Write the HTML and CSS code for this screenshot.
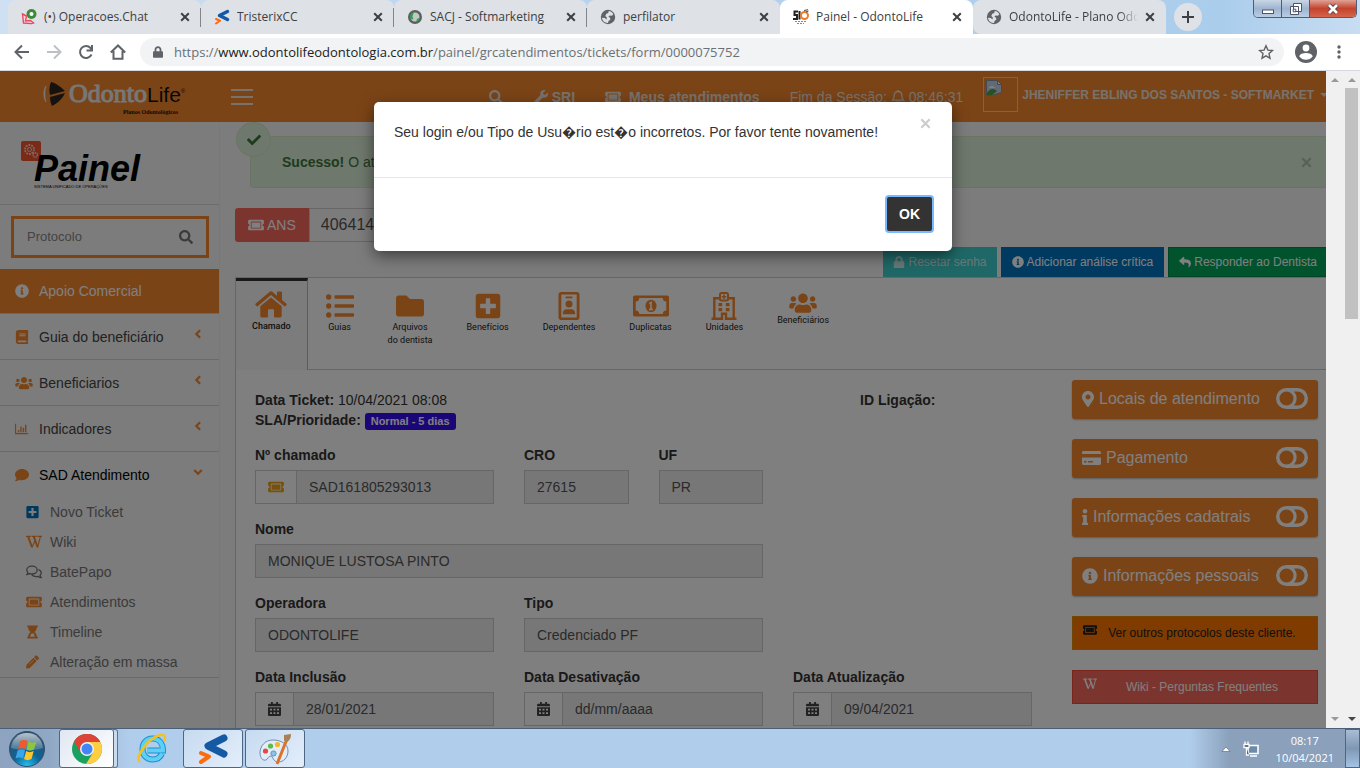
FILE: index.html
```html
<!DOCTYPE html>
<html lang="pt-BR">
<head>
<meta charset="utf-8">
<title>Painel - OdontoLife</title>
<link rel="stylesheet" href="styles.css">
</head>
<body>
<svg class="sprite" aria-hidden="true">
  <symbol id="i-search" viewBox="0 0 512 512"><path d="M505 442.700L405.300 343c-4.500-4.500-10.600-7-17-7H372c27.600-35.300 44-79.700 44-128C416 93.100 322.900 0 208 0S0 93.100 0 208s93.100 208 208 208c48.300 0 92.700-16.400 128-44v16.300c0 6.400 2.500 12.500 7 17l99.700 99.700c9.400 9.400 24.600 9.400 33.900 0l28.300-28.300c9.400-9.400 9.400-24.600.1-34zM208 336c-70.700 0-128-57.200-128-128 0-70.700 57.200-128 128-128 70.700 0 128 57.200 128 128 0 70.700-57.200 128-128 128z"/></symbol>
  <symbol id="i-wrench" viewBox="0 0 512 512"><path d="M507.730 109.100c-2.240-9.030-13.540-12.090-20.120-5.510l-74.360 74.360-67.880-11.310-11.310-67.880 74.360-74.360c6.620-6.620 3.430-17.900-5.660-20.160-47.380-11.740-99.550.91-136.580 37.930-39.640 39.640-50.550 97.100-34.050 147.200L18.740 402.760c-24.990 24.990-24.990 65.510 0 90.500 24.990 24.990 65.510 24.990 90.500 0l213.210-213.210c50.120 16.710 107.470 5.680 147.370-34.220 37.070-37.070 49.700-89.320 37.910-136.730zM64 472c-13.250 0-24-10.750-24-24 0-13.260 10.750-24 24-24s24 10.740 24 24c0 13.250-10.750 24-24 24z"/></symbol>
  <symbol id="i-ticket" viewBox="0 0 576 512"><path d="M128 160h320v192H128V160zm400 96c0 26.510 21.490 48 48 48v96c0 26.510-21.490 48-48 48H48c-26.510 0-48-21.490-48-48v-96c26.510 0 48-21.490 48-48s-21.490-48-48-48v-96c0-26.510 21.490-48 48-48h480c26.510 0 48 21.490 48 48v96c-26.510 0-48 21.490-48 48zm-48-104c0-13.255-10.745-24-24-24H120c-13.255 0-24 10.745-24 24v208c0 13.255 10.745 24 24 24h336c13.255 0 24-10.745 24-24V152z"/></symbol>
  <symbol id="i-info-circle" viewBox="0 0 512 512"><path d="M256 8C119.043 8 8 119.083 8 256c0 136.997 111.043 248 248 248s248-111.003 248-248C504 119.083 392.957 8 256 8zm0 110c23.196 0 42 18.804 42 42s-18.804 42-42 42-42-18.804-42-42 18.804-42 42-42zm56 254c0 6.627-5.373 12-12 12h-88c-6.627 0-12-5.373-12-12v-24c0-6.627 5.373-12 12-12h12v-64h-12c-6.627 0-12-5.373-12-12v-24c0-6.627 5.373-12 12-12h64c6.627 0 12 5.373 12 12v100h12c6.627 0 12 5.373 12 12v24z"/></symbol>
  <symbol id="i-book" viewBox="0 0 448 512"><path d="M448 360V24c0-13.300-10.700-24-24-24H96C43 0 0 43 0 96v320c0 53 43 96 96 96h328c13.300 0 24-10.700 24-24v-16c0-7.500-3.500-14.300-8.900-18.700-4.200-15.400-4.200-59.300 0-74.700 5.400-4.300 8.900-11.100 8.900-18.600zM128 134c0-3.300 2.700-6 6-6h212c3.300 0 6 2.700 6 6v20c0 3.300-2.700 6-6 6H134c-3.300 0-6-2.700-6-6v-20zm0 64c0-3.300 2.700-6 6-6h212c3.300 0 6 2.700 6 6v20c0 3.300-2.700 6-6 6H134c-3.300 0-6-2.700-6-6v-20zm253.400 250H96c-17.700 0-32-14.300-32-32 0-17.600 14.400-32 32-32h285.400c-1.900 17.100-1.900 46.900 0 64z"/></symbol>
  <symbol id="i-users" viewBox="0 0 640 512"><path d="M96 224c35.300 0 64-28.700 64-64s-28.700-64-64-64-64 28.700-64 64 28.700 64 64 64zm448 0c35.300 0 64-28.700 64-64s-28.700-64-64-64-64 28.700-64 64 28.700 64 64 64zm32 32h-64c-17.600 0-33.500 7.100-45.100 18.600 40.300 22.100 68.900 62 75.100 109.400h66c17.700 0 32-14.300 32-32v-32c0-35.300-28.700-64-64-64zm-256 0c61.900 0 112-50.100 112-112S381.900 32 320 32 208 82.100 208 144s50.100 112 112 112zm76.800 32h-8.300c-20.800 10-43.900 16-68.500 16s-47.600-6-68.500-16h-8.300C179.600 288 128 339.600 128 403.200V432c0 26.500 21.500 48 48 48h288c26.500 0 48-21.500 48-48v-28.800c0-63.600-51.600-115.200-115.200-115.200zm-223.700-13.400C161.500 263.100 145.600 256 128 256H64c-35.300 0-64 28.700-64 64v32c0 17.700 14.300 32 32 32h65.900c6.300-47.400 34.900-87.300 75.200-109.400z"/></symbol>
  <symbol id="i-comment" viewBox="0 0 512 512"><path d="M256 32C114.600 32 0 125.100 0 240c0 49.600 21.400 95 57 130.700C44.500 421.100 2.700 466 2.200 466.500c-2.200 2.300-2.800 5.700-1.500 8.700S4.800 480 8 480c66.300 0 116-31.800 140.600-51.400 32.700 12.300 69 19.400 107.400 19.400 141.400 0 256-93.100 256-208S397.400 32 256 32z"/></symbol>
  <symbol id="i-plus-square" viewBox="0 0 448 512"><path d="M400 32H48C21.500 32 0 53.500 0 80v352c0 26.500 21.500 48 48 48h352c26.500 0 48-21.500 48-48V80c0-26.500-21.500-48-48-48zm-32 252c0 6.600-5.400 12-12 12h-92v92c0 6.600-5.400 12-12 12h-56c-6.600 0-12-5.400-12-12v-92H92c-6.600 0-12-5.400-12-12v-56c0-6.600 5.400-12 12-12h92v-92c0-6.600 5.400-12 12-12h56c6.600 0 12 5.400 12 12v92h92c6.600 0 12 5.400 12 12v56z"/></symbol>
  <symbol id="i-lock" viewBox="0 0 448 512"><path d="M400 224h-24v-72C376 68.200 307.800 0 224 0S72 68.200 72 152v72H48c-26.500 0-48 21.500-48 48v192c0 26.500 21.500 48 48 48h352c26.500 0 48-21.500 48-48V272c0-26.500-21.500-48-48-48zm-104 0H152v-72c0-39.700 32.300-72 72-72s72 32.300 72 72v72z"/></symbol>
  <symbol id="i-marker" viewBox="0 0 384 512"><path d="M172.268 501.670C26.970 291.031 0 269.413 0 192 0 85.961 85.961 0 192 0s192 85.961 192 192c0 77.413-26.970 99.031-172.268 309.670-9.535 13.774-29.930 13.773-39.464 0zM192 272c44.183 0 80-35.817 80-80s-35.817-80-80-80-80 35.817-80 80 35.817 80 80 80z"/></symbol>
  <symbol id="i-reply" viewBox="0 0 512 512"><path d="M8.309 189.836L184.313 37.851C199.719 24.546 224 35.347 224 56.015v80.053c160.629 1.839 288 34.032 288 186.258 0 61.441-39.581 122.309-83.333 154.132-13.653 9.931-33.111-2.533-28.077-18.631 45.344-145.012-21.507-183.510-176.590-185.742V360c0 20.700-24.300 31.453-39.687 18.164l-176.004-152c-11.071-9.562-11.086-26.753 0-36.328z"/></symbol>
  <symbol id="i-check" viewBox="0 0 512 512"><path d="M173.898 439.404l-166.400-166.400c-9.997-9.997-9.997-26.206 0-36.204l36.203-36.204c9.997-9.998 26.207-9.998 36.204 0L192 312.690 432.095 72.596c9.997-9.997 26.207-9.997 36.204 0l36.203 36.204c9.997 9.997 9.997 26.206 0 36.204l-294.400 294.401c-9.998 9.997-26.207 9.997-36.204-.001z"/></symbol>
  <symbol id="i-pencil" viewBox="0 0 512 512"><path d="M497.900 142.100l-46.100 46.100c-4.700 4.700-12.300 4.700-17 0l-111-111c-4.700-4.700-4.700-12.300 0-17l46.100-46.100c18.700-18.700 49.100-18.700 67.900 0l60.100 60.100c18.800 18.700 18.800 49.100 0 67.900zM284.200 99.800L21.600 362.400.4 483.900c-2.900 16.400 11.400 30.600 27.800 27.800l121.500-21.300 262.600-262.600c4.700-4.700 4.700-12.300 0-17l-111-111c-4.800-4.700-12.400-4.700-17.100 0z"/><path d="M135 350L300 185" stroke="#f8f8f8" stroke-width="26"/></symbol>
  <symbol id="i-chart" viewBox="0 0 16 14"><path d="M0 1h1.300v10.700H15V13H0z M3.300 8h1.600v2.800H3.300z M6 4h1.600v6.800H6z M8.800 5.500h1.600v5.300H8.800z M11.400 2H13v8.800h-1.600z"/></symbol>
  <symbol id="i-wiki" viewBox="0 0 17 14"><path d="M0 1h5.200M6 1h5.400M12.200 1H17" fill="none" stroke="currentColor" stroke-width="1.200"/><path d="M2.200 1L6.200 12.200M8.200 1l4 11.200" fill="none" stroke="currentColor" stroke-width="2"/><path d="M6.200 13L10 4.500M12.200 13L15.400 1" fill="none" stroke="currentColor" stroke-width="1.200"/></symbol>
  <symbol id="i-chat" viewBox="0 0 16 14"><path d="M6 1.200c3 0 5.200 1.700 5.200 3.900S9 9 6 9c-.9 0-1.700-.1-2.400-.4C3 9.100 2 9.600.8 9.600c.6-.7 1-1.300 1.100-2C1.200 6.900.8 6 .8 5.100.8 2.900 3 1.200 6 1.200zM12.400 4.600c1.700.6 2.800 1.800 2.800 3.300 0 .9-.4 1.700-1.100 2.400.1.800.5 1.500 1.100 2.200-1.200 0-2.200-.5-2.900-1.100-.6.2-1.300.3-2 .3-2 0-3.700-.8-4.600-2" fill="none" stroke="currentColor" stroke-width="1.300"/></symbol>
  <symbol id="i-hourglass" viewBox="0 0 12 16"><path d="M0 .5h12v2h-1c0 2.600-1.200 4.500-3 5.500 1.800 1 3 2.900 3 5.500h1v2H0v-2h1C1 10.900 2.200 9 4 8 2.200 7 1 5.100 1 2.500H0zM3.300 13.500h5.400C8.400 11 7.500 9.300 6 9.300S3.600 11 3.300 13.500z"/></symbol>
  <symbol id="i-home" viewBox="0 0 32 28"><path d="M15 .6a2 2 0 0 1 2 0L22 4.700V1.300c0-.5.300-.8.800-.8h3.400c.5 0 .8.300.8.800v7.600l4.500 3.800c.4.300.4.800.1 1.100l-1.100 1.300c-.3.300-.8.400-1.100.1L16 4 2.600 15.200c-.3.300-.8.200-1.100-.1L.4 13.800c-.3-.3-.2-.8.100-1.100z"/><path d="M16 6.400L26.700 15.200V25c0 .8-.6 1.400-1.400 1.400h-5.500c-.4 0-.8-.4-.8-.8V19c0-.4-.4-.8-.8-.8h-4.400c-.4 0-.8.400-.8.800v6.600c0 .4-.4.8-.8.8H6.700c-.8 0-1.400-.6-1.400-1.400v-9.800z"/></symbol>
  <symbol id="i-list" viewBox="0 0 28 28"><circle cx="2.700" cy="5" r="2.700"/><circle cx="2.700" cy="14" r="2.700"/><circle cx="2.700" cy="23" r="2.700"/><rect x="8.500" y="3.200" width="19.500" height="3.600" rx=".8"/><rect x="8.500" y="12.200" width="19.500" height="3.600" rx=".8"/><rect x="8.500" y="21.200" width="19.500" height="3.600" rx=".8"/></symbol>
  <symbol id="i-folder" viewBox="0 0 28 28"><path d="M2.600 3.500h7.800L14 7h11.400C26.900 7 28 8.200 28 9.600v12.300c0 1.400-1.100 2.600-2.600 2.600H2.600C1.200 24.500 0 23.300 0 21.900V6.100c0-1.400 1.200-2.600 2.600-2.600z"/></symbol>
  <symbol id="i-badge" viewBox="0 0 21 28"><path d="M2.600 0h15.800C19.900 0 21 1.200 21 2.600v22.800c0 1.400-1.100 2.600-2.600 2.600H2.600C1.200 28 0 26.800 0 25.400V2.600C0 1.200 1.200 0 2.600 0zm.2 2.600v22.800h15.400V2.600z"/><rect x="7" y="4.500" width="7" height="1.700" rx=".6"/><circle cx="10.500" cy="12" r="3.500"/><path d="M4.400 22.200v-1.400c0-2 1.700-3.600 3.700-3.600h4.800c2 0 3.700 1.600 3.700 3.600v1.400z"/></symbol>
  <symbol id="i-money" viewBox="0 0 36 28"><path d="M1.700 3.500h32.600c1 0 1.700.8 1.700 1.700v17.600c0 .9-.7 1.700-1.700 1.700H1.700c-1 0-1.700-.8-1.700-1.700V5.200c0-.9.700-1.700 1.700-1.700zM6.200 6A3.500 3.500 0 0 1 2.700 9.500v9a3.500 3.500 0 0 1 3.500 3.500h23.600a3.500 3.500 0 0 1 3.500-3.500v-9A3.500 3.500 0 0 1 29.800 6z"/><ellipse cx="18" cy="14" rx="5.500" ry="6.200"/><path d="M16.300 11.700l1.700-1.200v6.700M16 17.400h4" fill="none" stroke="#fff" stroke-width="1.600"/></symbol>
  <symbol id="i-hospital" viewBox="0 0 25 28"><path fill="none" stroke="currentColor" stroke-width="2.400" d="M2.800 26V6.200h5.700M16.500 6.200h5.700V26M0 26.700h10.500v-5h4v5H25"/><rect x="8.500" y="1" width="8" height="7.500" rx="1.500" fill="none" stroke="currentColor" stroke-width="2"/><path d="M12.500 2.500v4.600M10.200 4.800h4.600" stroke="currentColor" stroke-width="1.500"/><path d="M7 11h3.700v3.200H7zm7.300 0H18v3.200h-3.700zM7 16h3.700v3.200H7zm7.300 0H18v3.200h-3.700z"/></symbol>
  <symbol id="i-toggle" viewBox="0 0 32 21"><path d="M10.500 0h11a10.500 10.500 0 0 1 0 21h-11a10.500 10.500 0 0 1 0-21zm0 3.500a7 7 0 1 0 0 14 7 7 0 1 0 0-14zm7.500 0a10.500 10.500 0 0 1 0 14h3.500a7 7 0 1 0 0-14z" fill-rule="evenodd"/></symbol>
  <symbol id="i-card" viewBox="0 0 19 16"><path d="M1.500 1h16c.8 0 1.500.7 1.500 1.500V4H0V2.500C0 1.700.7 1 1.500 1zM0 7.500h19v6c0 .8-.7 1.500-1.500 1.500h-16C.7 15 0 14.300 0 13.500zM2 11v1.600h2.500V11zm4 0v1.600h5V11z" fill-rule="evenodd"/></symbol>
  <symbol id="i-info" viewBox="0 0 6 16"><circle cx="3" cy="2.300" r="2.300"/><path d="M.3 6h4.500v7.700H6V16H0v-2.300h1.200V8.300H.3z"/></symbol>
  <symbol id="i-calendar" viewBox="0 0 13 14"><path d="M1.300 1.700H3V0h1.800v1.700h3.400V0H10v1.700h1.700c.7 0 1.300.6 1.300 1.300v1.300H0V3c0-.7.600-1.300 1.300-1.300zM0 5.200h13v7.500c0 .7-.6 1.300-1.300 1.300H1.300C.6 14 0 13.400 0 12.700zm2 1.500v1.800h2V6.700zm3.500 0v1.800h2V6.700zm3.500 0v1.800h2V6.700zM2 10.200V12h2v-1.800zm3.500 0V12h2v-1.800zm3.500 0V12h2v-1.800z" fill-rule="evenodd"/></symbol>
  <symbol id="i-bell" viewBox="0 0 14 14"><path d="M7 1.500c2.400 0 3.800 1.800 3.800 4 0 2.600.7 3.600 1.700 4.700h-11c1-1.100 1.700-2.100 1.700-4.700 0-2.200 1.400-4 3.800-4z" fill="none" stroke="currentColor" stroke-width="1.300"/><path d="M6.300 0h1.400v1.500H6.300zM5.200 11.600h3.600C8.700 12.900 8 13.600 7 13.600s-1.700-.7-1.800-2z"/></symbol>
  <symbol id="i-left" viewBox="0 0 8 12"><path d="M6.500 1.500L2 6l4.500 4.500" fill="none" stroke="currentColor" stroke-width="2.600"/></symbol>
  <symbol id="i-down" viewBox="0 0 12 8"><path d="M1.500 1.500L6 6l4.500-4.500" fill="none" stroke="currentColor" stroke-width="2.600"/></symbol>
  <symbol id="i-x" viewBox="0 0 10 10"><path d="M1.200 1.200l7.600 7.600M8.800 1.200L1.200 8.800" fill="none" stroke="currentColor" stroke-width="2"/></symbol>
  <symbol id="i-globe" viewBox="0 0 16 16"><circle cx="8" cy="8" r="7.200"/><path d="M8.700 2.100c2 0 3.900 1.500 4.600 3.400l-1.500 1.300-2.100-.3-1.300 1.200 1.700 1 .2 2-1.800 1.200-.5 2c-3.300.2-5.700-2.200-6-5.200l2.800.2 1.700 1.500.3-1.800L5.300 7l1-2.300 2-.6z" fill="#dee1e6"/></symbol>
  <symbol id="i-chevs" viewBox="0 0 32 32"><path d="M27 5L11 13l16 8" fill="none" stroke="#1559a5" stroke-width="7" stroke-linecap="round" stroke-linejoin="round"/><path d="M4 20l8 3.500L4 29" fill="none" stroke="#ff6a0c" stroke-width="4" stroke-linecap="round" stroke-linejoin="round"/></symbol>
</svg>

<header class="browser">
  <div class="tabstrip">
    <div class="tab"><svg class="fav" viewBox="0 0 16 16"><path d="M1.500 5l4 2-1 5 5-.5 3 2.500-2 .6-8-.6z" fill="#fbd5da" stroke="#e94b66" stroke-width="1.400"/><circle cx="10.500" cy="5" r="5" fill="#3d8b35"/><circle cx="10.500" cy="5" r="2" fill="#fff"/></svg><span class="tab-title">(•) Operacoes.Chat</span><button class="tab-close" aria-label="Fechar guia"><svg><use href="#i-x"/></svg></button></div>
    <div class="tab"><svg class="fav"><use href="#i-chevs"/></svg><span class="tab-title">TristerixCC</span><button class="tab-close" aria-label="Fechar guia"><svg><use href="#i-x"/></svg></button></div>
    <div class="tab"><svg class="fav" viewBox="0 0 16 16"><circle cx="8" cy="8" r="7" fill="#5b5f5c"/><circle cx="8" cy="8" r="4.500" fill="#c4c8c5"/><path d="M3 8c0-2.500 1.500-4.300 4-5L5.500 7.500l1 3C4.500 10.500 3 9.500 3 8zM13 8.500c0 2-1.500 4-4 4.500l1-3z" fill="#2f9e57"/></svg><span class="tab-title">SACJ - Softmarketing</span><button class="tab-close" aria-label="Fechar guia"><svg><use href="#i-x"/></svg></button></div>
    <div class="tab no-sep before-active"><svg class="fav"><use href="#i-globe"/></svg><span class="tab-title">perfilator</span><button class="tab-close" aria-label="Fechar guia"><svg><use href="#i-x"/></svg></button></div>
    <div class="tab active"><svg class="fav" viewBox="0 0 16 16"><path d="M5 2.500H1.500V6H4v4H0M6.500 2v8.500" fill="none" stroke="#222" stroke-width="2"/><circle cx="11.500" cy="6.500" r="3.500" fill="none" stroke="#f47b20" stroke-width="2"/><path d="M11 1.500l4-.8M13 3l2.500-1" stroke="#444"/><path d="M2 12.500h12M4 14.500h7" stroke="#888" stroke-dasharray="2 1"/></svg><span class="tab-title">Painel - OdontoLife</span><button class="tab-close" aria-label="Fechar guia"><svg><use href="#i-x"/></svg></button></div>
    <div class="tab no-sep last"><svg class="fav"><use href="#i-globe"/></svg><span class="tab-title fade">OdontoLife - Plano Odontológico</span><button class="tab-close" aria-label="Fechar guia"><svg><use href="#i-x"/></svg></button></div>
    <button class="new-tab" aria-label="Nova guia"><svg viewBox="0 0 12 12"><path d="M6 0v12M0 6h12" stroke="#3c4043" stroke-width="2"/></svg></button>
    <div class="win-buttons">
      <button aria-label="Minimizar"><svg viewBox="0 0 12 12"><rect x=".5" y="7" width="11" height="3.500" fill="#fff" stroke="#4b5468"/></svg></button>
      <button aria-label="Restaurar"><svg viewBox="0 0 12 12"><path d="M3.500.5h8v8h-8zM.5 3.500h8v8h-8z" fill="#fff" stroke="#4b5468"/><path d="M3.200 6.200h2.600v2.600H3.200z" fill="#fff" stroke="#4b5468"/></svg></button>
      <button class="win-close" aria-label="Fechar"><svg viewBox="0 0 12 12"><path d="M2 2l8 8M10 2l-8 8" stroke="#4b3a48" stroke-width="4.500"/><path d="M2 2l8 8M10 2l-8 8" stroke="#fff" stroke-width="2.800"/></svg></button>
    </div>
  </div>
  <div class="toolbar">
    <button class="nav-btn" aria-label="Voltar"><svg viewBox="0 0 16 16"><path d="M15 8H2M8 1.500L1.500 8 8 14.500"/></svg></button>
    <button class="nav-btn muted" aria-label="Avançar"><svg viewBox="0 0 16 16"><path d="M1 8h13M8 1.500L14.500 8 8 14.500"/></svg></button>
    <button class="nav-btn" aria-label="Atualizar"><svg viewBox="0 0 16 16"><path d="M13.500 10.500A6 6 0 1 1 12.500 4l1.500 1.800M14 1v5.500H8.500"/></svg></button>
    <button class="nav-btn" aria-label="Página inicial"><svg viewBox="0 0 16 16"><path d="M.8 8.500L8 1.500l7.200 7M3.500 7v7.800h9V7"/></svg></button>
    <div class="omnibox">
      <svg class="omni-lock"><use href="#i-lock"/></svg>
      <span class="url">https://<b>www.odontolifeodontologia.com.br</b>/painel/grcatendimentos/tickets/form/0000075752</span>
      <button class="star" aria-label="Favoritar"><svg viewBox="0 0 16 16"><path d="M8 1.800l1.900 4.300 4.600.4-3.500 3.100 1 4.600-4-2.400-4 2.400 1-4.600L1.500 6.500l4.600-.4z" fill="none" stroke="#5f6368" stroke-width="1.400"/></svg></button>
    </div>
    <button class="avatar" aria-label="Perfil"><svg viewBox="0 0 22 22"><circle cx="11" cy="11" r="11" fill="#5f6368"/><circle cx="11" cy="7" r="3.400" fill="#fff"/><path d="M4.300 15.500c0-2.400 4.300-3.500 6.700-3.500s6.700 1.100 6.700 3.500c-1.500 2-4 3.300-6.700 3.300s-5.200-1.300-6.700-3.300z" fill="#fff"/></svg></button>
    <button class="kebab" aria-label="Menu"><svg viewBox="0 0 4 14"><circle cx="2" cy="2" r="1.700"/><circle cx="2" cy="7" r="1.700"/><circle cx="2" cy="12" r="1.700"/></svg></button>
  </div>
</header>

<div class="viewport">
  <div class="page">
    <div class="topbar">
      <a href="#" class="brand">
        <svg class="brand-mark" viewBox="0 0 24 24"><path d="M4 4C1 8 1 16 4 20 2.500 15 2.500 9 4 4z" fill="#eee" stroke="#eee" stroke-width=".6"/><path d="M9 0c5 1 10 5 14 9L8 13C7 9 7 5 9 0zM8 15l15-4c-2 5-7 10-13 13-1-2-2-5-2-9z" fill="#2c2420"/></svg>
        <span class="brand-text"><span class="brand-name"><span class="brand-odonto">Odonto</span><span class="brand-life">Life<sup>®</sup></span></span><small>Planos Odontológicos</small></span>
      </a>
      <button class="burger" aria-label="Menu"><i></i><i></i><i></i></button>
      <nav class="topnav">
        <a href="#" aria-label="Buscar"><svg class="ic16"><use href="#i-search"/></svg></a>
        <a href="#"><svg class="ic14"><use href="#i-wrench"/></svg> <b>SRI</b></a>
        <a href="#" class="nav-tickets"><svg class="ic16"><use href="#i-ticket"/></svg> <b>Meus atendimentos</b></a>
        <span class="session">Fim da Sessão: <svg class="ic14"><use href="#i-bell"/></svg> 08:46:31</span>
        <a href="#" class="user"><span class="user-pic"><svg viewBox="0 0 16 16"><path d="M.5.500h11l4 4v8L5 15.500H.5z" fill="#c5d5ec" stroke="#8a93a3"/><path d="M3 8c0-2 4-3 5-1l2 1H3z" fill="#fff"/><path d="M1 13c3-5 7-5 10-2l-5 4H1z" fill="#4da53f"/><path d="M11.500.5v4h4z" fill="#fff" stroke="#8a93a3"/></svg></span><b>JHENIFFER EBLING DOS SANTOS - SOFTMARKET</b><i class="caret"></i></a>
      </nav>
    </div>
    <div class="columns">
      <aside class="sidebar">
        <a href="#" class="panel-logo">
          <svg class="gear" viewBox="0 0 20 20"><rect width="20" height="20" rx="2" fill="#f4552f"/><g fill="none" stroke="#f8d8cf"><circle cx="8.500" cy="8.500" r="4.500" stroke-width="1.800" stroke-dasharray="1.800 1"/><circle cx="8.500" cy="8.500" r="2"/><circle cx="14.300" cy="14" r="2.200" stroke-width="1.500" stroke-dasharray="1.200 .6"/></g></svg>
          <span class="panel-word">Painel<small>SISTEMA UNIFICADO DE OPERAÇÕES</small></span>
        </a>
        <form class="search"><input type="text" aria-label="Protocolo" placeholder="Protocolo"><button type="button" aria-label="Pesquisar"><svg class="ic14"><use href="#i-search"/></svg></button></form>
        <ul class="menu">
          <li><a href="#" class="current"><svg class="ic14"><use href="#i-info-circle"/></svg><span>Apoio Comercial</span></a></li>
          <li><a href="#"><svg class="ic14"><use href="#i-book"/></svg><span>Guia do beneficiário</span><svg class="arr"><use href="#i-left"/></svg></a></li>
          <li><a href="#"><svg class="ic18"><use href="#i-users"/></svg><span>Beneficiarios</span><svg class="arr"><use href="#i-left"/></svg></a></li>
          <li><a href="#"><svg class="ic14"><use href="#i-chart"/></svg><span>Indicadores</span><svg class="arr"><use href="#i-left"/></svg></a></li>
          <li><a href="#" class="open"><svg class="ic14"><use href="#i-comment"/></svg><span>SAD Atendimento</span><svg class="arr"><use href="#i-down"/></svg></a>
            <ul class="submenu">
              <li><a href="#"><svg class="c-blue"><use href="#i-plus-square"/></svg>Novo Ticket</a></li>
              <li><a href="#"><svg class="wide"><use href="#i-wiki"/></svg>Wiki</a></li>
              <li><a href="#"><svg class="wide c-gray"><use href="#i-chat"/></svg>BatePapo</a></li>
              <li><a href="#"><svg class="wide"><use href="#i-ticket"/></svg>Atendimentos</a></li>
              <li><a href="#"><svg><use href="#i-hourglass"/></svg>Timeline</a></li>
              <li><a href="#"><svg><use href="#i-pencil"/></svg>Alteração em massa</a></li>
            </ul>
          </li>
        </ul>
      </aside>
      <main class="main">
        <div class="alert"><span class="alert-badge"><svg class="ic14"><use href="#i-check"/></svg></span><span><b>Sucesso!</b> O atendimento</span><button aria-label="Fechar aviso"><svg><use href="#i-x"/></svg></button></div>
        <div class="ans"><label for="ans"><svg class="ic16"><use href="#i-ticket"/></svg> ANS</label><input id="ans" value="406414" readonly></div>
        <div class="actions">
          <button class="b-teal"><svg class="ic12"><use href="#i-lock"/></svg> Resetar senha</button>
          <button class="b-blue"><svg class="ic12"><use href="#i-info-circle"/></svg> Adicionar análise crítica</button>
          <button class="b-green"><svg class="ic12"><use href="#i-reply"/></svg> Responder ao Dentista</button>
        </div>
        <section class="panel">
          <nav class="tabs">
            <a href="#" class="on"><svg class="w32"><use href="#i-home"/></svg>Chamado</a>
            <a href="#"><svg><use href="#i-list"/></svg>Guias</a>
            <a href="#"><svg><use href="#i-folder"/></svg>Arquivos<br>do dentista</a>
            <a href="#"><svg><use href="#i-plus-square"/></svg>Benefícios</a>
            <a href="#"><svg><use href="#i-badge"/></svg>Dependentes</a>
            <a href="#"><svg class="w36"><use href="#i-money"/></svg>Duplicatas</a>
            <a href="#"><svg><use href="#i-hospital"/></svg>Unidades</a>
            <a href="#" class="short"><svg><use href="#i-users"/></svg>Beneficiários</a>
          </nav>
          <div class="panel-body">
            <form class="form">
              <div class="meta"><p><b>Data Ticket:</b> 10/04/2021 08:08<br><b>SLA/Prioridade:</b> <span class="tag">Normal - 5 dias</span></p><p class="call"><b>ID Ligação:</b></p></div>
              <div class="field"><label for="f1">Nº chamado</label><div class="group"><span class="addon yellow"><svg class="ic16"><use href="#i-ticket"/></svg></span><input id="f1" value="SAD161805293013" readonly></div></div>
              <div class="pair">
                <div class="field"><label for="f2">CRO</label><input id="f2" value="27615" readonly></div>
                <div class="field"><label for="f3">UF</label><input id="f3" value="PR" readonly></div>
              </div>
              <div class="field span2 start"><label for="f4">Nome</label><input id="f4" value="MONIQUE LUSTOSA PINTO" readonly></div>
              <div class="field start"><label for="f5">Operadora</label><input id="f5" value="ODONTOLIFE" readonly></div>
              <div class="field"><label for="f6">Tipo</label><input id="f6" value="Credenciado PF" readonly></div>
              <div class="field start"><label for="f7">Data Inclusão</label><div class="group"><span class="addon"><svg class="ic13"><use href="#i-calendar"/></svg></span><input id="f7" value="28/01/2021" readonly></div></div>
              <div class="field"><label for="f8">Data Desativação</label><div class="group"><span class="addon"><svg class="ic13"><use href="#i-calendar"/></svg></span><input id="f8" value="dd/mm/aaaa" readonly></div></div>
              <div class="field"><label for="f9">Data Atualização</label><div class="group"><span class="addon"><svg class="ic13"><use href="#i-calendar"/></svg></span><input id="f9" value="09/04/2021" readonly></div></div>
            </form>
            <div class="boxes">
              <button class="box"><svg class="w12"><use href="#i-marker"/></svg><span>Locais de atendimento</span><svg class="tog"><use href="#i-toggle"/></svg></button>
              <button class="box"><svg class="w19"><use href="#i-card"/></svg><span>Pagamento</span><svg class="tog"><use href="#i-toggle"/></svg></button>
              <button class="box"><svg class="w6"><use href="#i-info"/></svg><span>Informações cadatrais</span><svg class="tog"><use href="#i-toggle"/></svg></button>
              <button class="box"><svg class="w16"><use href="#i-info-circle"/></svg><span>Informações pessoais</span><svg class="tog"><use href="#i-toggle"/></svg></button>
              <button class="wide-btn amber"><svg class="ic14"><use href="#i-ticket"/></svg><span>Ver outros protocolos deste cliente.</span></button>
              <button class="wide-btn coral"><svg class="ic14"><use href="#i-wiki"/></svg><span>Wiki - Perguntas Frequentes</span></button>
            </div>
          </div>
        </section>
      </main>
    </div>
    <div class="backdrop"></div>
    <div class="modal" role="dialog" aria-modal="true">
      <div class="modal-body"><p>Seu login e/ou Tipo de Usu&#xFFFD;rio est&#xFFFD;o incorretos. Por favor tente novamente!</p><button class="modal-x" aria-label="Fechar"><svg><use href="#i-x"/></svg></button></div>
      <div class="modal-foot"><button class="ok">OK</button></div>
    </div>
  </div>
  <div class="scrollbar off"><i class="up"></i><i class="down"></i></div>
  <div class="scrollbar"><i class="up"></i><span class="thumb"></span><i class="down"></i></div>
</div>

<footer class="taskbar">
  <button class="start-btn" aria-label="Iniciar"><svg viewBox="0 0 36 36"><defs><radialGradient id="orb" cx=".5" cy="1" r=".9"><stop offset="0" stop-color="#25c5f5"/><stop offset=".45" stop-color="#0d6396"/><stop offset="1" stop-color="#32536f"/></radialGradient><linearGradient id="shine" x2="0" y2="1"><stop offset="0" stop-color="#fff" stop-opacity=".65"/><stop offset="1" stop-color="#fff" stop-opacity=".15"/></linearGradient></defs><circle cx="18" cy="18" r="17.500" fill="url(#orb)" stroke="#31506b"/><path d="M2 17C3 8 9 2 18 2s15 6 16 15c-9 3-22 3-32 0z" fill="url(#shine)"/><path d="M11 10c3-1.500 5-1.500 7.500 0L16.500 18c-2.500-1.500-5-1.500-7.500 0z" fill="#f0592b"/><path d="M19.500 10.500c3 1.500 5 1.500 8 0L25 18.500c-3 1.500-5 1.500-7.500 0z" fill="#8cc63f"/><path d="M8.600 19.500c2.500-1.500 5-1.500 7.500 0L14 27.500c-2.500-1.500-5-1.500-7.500 0z" fill="#3aa5e8"/><path d="M17.200 20c2.500 1.500 4.500 1.500 7.500 0L22.500 28c-3 1.500-5 1.500-7.500 0z" fill="#fdc62e"/></svg></button>
  <button class="task chrome" aria-label="Chrome"><svg viewBox="0 0 32 32"><circle cx="16" cy="16" r="15" fill="#1aa15f"/><path d="M16 16L3 8.500A15 15 0 0 1 29 8.500z" fill="#db4437"/><path d="M3 8.500A15 15 0 0 1 29.200 9H16L9.500 19.500z" fill="#db4437"/><path d="M29.200 9A15 15 0 0 1 15 31l7.200-11.500L16 9z" fill="#ffcd40"/><circle cx="16" cy="16" r="7" fill="#f1f1f1"/><circle cx="16" cy="16" r="5.500" fill="#4285f4"/></svg></button>
  <button class="task plain" aria-label="Internet Explorer"><svg viewBox="0 0 32 32"><path d="M26 20.500c-1.500 3.500-5 6-9.500 6-6 0-10-4.500-10-10.500s4-10.500 10-10.500S27 10 27 17.500H11.500" fill="none" stroke="#1d8fd2" stroke-width="6"/><path d="M26 20.500c-1.500 3.500-5 6-9.500 6-6 0-10-4.500-10-10.500s4-10.500 10-10.500S27 10 27 17.500H11.500" fill="none" stroke="#5fd0f5" stroke-width="4"/><path d="M4 29C-2 25 12 5 24 2c5-1 6 2 4 6" fill="none" stroke="#f5c21b" stroke-width="2.600"/></svg></button>
  <button class="task" aria-label="Tristerix"><svg><use href="#i-chevs"/></svg></button>
  <button class="task" aria-label="Paint"><svg viewBox="0 0 32 32"><path d="M14 7C6 7 1 13 1 20c0 5 3 8 6 7 2-1 2-4 5-4 2 0 2 6 7 6 6 0 10-5 10-11 0-7-7-11-15-11z" fill="#e3edf7" stroke="#6b8fb5"/><circle cx="6.500" cy="18" r="2.600" fill="#e8483f"/><circle cx="11.500" cy="13" r="2.600" fill="#5dbb46"/><circle cx="18.500" cy="11.500" r="2.600" fill="#f5b52c"/><circle cx="14.500" cy="20.500" r="2.600" fill="#8cc4e8" stroke="#5c94c0"/><path d="M28 6L18 31" stroke="#d9752b" stroke-width="3"/><path d="M25 2l7-1c0 4-1 6-4 8l-3-1.500z" fill="#a98156"/></svg></button>
  <div class="tray">
    <svg class="tray-up" viewBox="0 0 10 6"><path d="M1 5.500L5 1l4 4.500z" fill="#fff" stroke="#4e6278" stroke-width=".6"/></svg>
    <svg class="tray-net" viewBox="0 0 16 16"><path d="M5 4.500h10v8H5zM7 15h7" fill="#6f8aa8" stroke="#fff" stroke-width="1.600"/><path d="M2 .5v3M5 .5v3M1 3.500h5v3H1zM3.500 6.500V14H6" fill="#3b4a5c" stroke="#fff" stroke-width="1.300"/></svg>
    <div class="clock"><span>08:17</span><span>10/04/2021</span></div>
    <button class="show-desktop" aria-label="Mostrar área de trabalho"></button>
  </div>
</footer>
</body>
</html>
```
FILE: styles.css
```css
* { box-sizing: border-box; }
body { margin: 0; height: 100vh; display: flex; flex-direction: column; overflow: hidden; font: 14px/20px "Liberation Sans", Arial, sans-serif; color: #333; }
button, input { font: inherit; color: inherit; margin: 0; }
button { border: 0; padding: 0; background: none; display: inline-flex; align-items: center; justify-content: center; }
a { color: inherit; text-decoration: none; }
ul { list-style: none; margin: 0; padding: 0; }
p { margin: 0; }
svg { fill: currentColor; flex: none; }
.sprite { display: none; }
.ic12 { width: 12px; height: 12px; }
.ic13 { width: 13px; height: 14px; }
.ic14 { width: 14px; height: 14px; }
.ic16 { width: 16px; height: 14px; }
.ic18 { width: 18px; height: 14px; }

/* Browser frame */
.browser { flex: none; font-family: "Open Sans", "Noto Sans", sans-serif; }
.tabstrip { display: flex; height: 34px; padding-left: 8px; background: linear-gradient(90deg, #cfe0f3, #b4d0ee 50%, #abcdec 90%, #c8ddf2); }
.tab { flex: 0 0 193px; min-width: 0; display: flex; align-items: center; padding: 0 8px 0 13px; background: #dee1e6; border-radius: 8px 8px 0 0; position: relative; }
.tab::after { content: ""; position: absolute; right: 0; top: 8px; width: 1px; height: 19px; background: #80868b; }
.tab.active { background: #fff; }
.tab.active::after, .tab.no-sep::after { display: none; }
.tab.last { border-bottom-left-radius: 8px; }
.fav { width: 16px; height: 16px; color: #5f6368; }
.tab-title { flex: 1; min-width: 0; margin-left: 7px; font-size: 12px; color: #3c4043; white-space: nowrap; overflow: hidden; }
.fade { margin-right: 4px; mask-image: linear-gradient(90deg, #000 85%, transparent); }
.tab-close { flex: none; width: 16px; height: 16px; color: #3c4043; }
.tab-close svg { width: 10px; height: 10px; }
.new-tab { flex: none; width: 28px; height: 28px; margin: 3px 0 0 8px; border-radius: 50%; background: #dee1e6; }
.new-tab svg { width: 12px; height: 12px; }
.win-buttons { display: flex; height: 18px; margin: 0 3px 0 auto; border: 1px solid #4f5d74; border-top: 0; border-radius: 0 0 5px 5px; overflow: hidden; }
.win-buttons button { width: 28px; background: linear-gradient(#c9d6e6, #9fb4cf 50%, #b9cde3); border-right: 1px solid #4f5d74; }
.win-buttons svg { width: 12px; height: 12px; }
.win-buttons .win-close { width: 46px; border: 0; background: linear-gradient(#dfa296, #c4432d 50%, #d4644a); }
.toolbar { display: flex; align-items: center; height: 37px; padding: 0 14px 0 6px; border-bottom: 1px solid #d5d8dc; background: #fff; }
.nav-btn { width: 32px; height: 28px; }
.nav-btn svg { width: 16px; height: 16px; fill: none; stroke: #5f6368; stroke-width: 2; }
.nav-btn.muted svg { stroke: #bdc1c6; }
.omnibox { flex: 1; display: flex; align-items: center; height: 28px; margin-left: 6px; padding: 0 10px 0 13px; border-radius: 14px; background: #f1f3f4; }
.omni-lock { width: 10px; height: 12px; color: #5f6368; }
.url { flex: 1; margin-left: 11px; font-size: 13px; color: #6b7075; white-space: nowrap; }
.url b { font-weight: 400; color: #202124; }
.star svg { width: 16px; height: 16px; }
.avatar { margin-left: 11px; }
.avatar svg { width: 22px; height: 22px; }
.kebab { width: 14px; margin-left: 15px; color: #5f6368; }
.kebab svg { width: 4px; height: 14px; }

/* Page */
.viewport { flex: 1; min-height: 0; display: flex; }
.page { flex: 1; min-width: 0; position: relative; display: flex; flex-direction: column; overflow: hidden; background: #f8f8f8; }
.topbar { flex: none; display: flex; height: 51px; background: #f7882f; color: #f0e4da; white-space: nowrap; }
.brand { flex: none; width: 220px; display: flex; align-items: flex-start; padding: 8px 0 0 42px; }
.brand-mark { width: 24px; height: 26px; margin-top: 2px; }
.brand-text { display: flex; flex-direction: column; margin-left: 3px; }
.brand-name { display: flex; align-items: baseline; line-height: 30px; }
.brand-odonto { font-family: "Liberation Serif", serif; font-size: 26px; color: #eee; -webkit-text-stroke: 1px #eee; }
.brand-life { color: #111; font-size: 21px; }
.brand-life sup { font-size: 6px; line-height: 6px; vertical-align: 9px; }
.brand-text small { margin: -2px 0 0 54px; font: 700 6px/8px "Liberation Serif", serif; color: #111; }
.burger { flex-direction: column; gap: 5px; width: 22px; margin-left: 11px; }
.burger i { width: 22px; height: 2px; background: #f0e4da; }
.topnav { flex: 1; display: flex; align-items: center; justify-content: flex-end; }
.topnav > * { flex: none; margin-right: 30px; }
.topnav svg { vertical-align: -2px; }
.nav-tickets svg { margin-right: 4px; }
.topnav .user { display: flex; align-items: center; margin: 0 -2px 0 -10px; font-size: 12px; padding-bottom: 4px; }
.user-pic { width: 35px; height: 35px; padding: 2px; margin-right: 4px; border: 1px solid #c9d6dc; display: flex; align-items: flex-start; }
.user-pic svg { width: 16px; height: 16px; }
.caret { border: 4px solid transparent; border-top-color: #e8e0d8; border-bottom: 0; margin-left: 6px; }
.columns { flex: 1; min-height: 0; display: flex; }
.sidebar { flex: 0 0 220px; min-width: 0; border-right: 1px solid #f0f0f0; }
.panel-logo { display: flex; height: 83px; padding: 19px 0 0 21px; border-bottom: 1px solid #d8d8d8; }
.gear { width: 20px; height: 20px; }
.panel-word { margin: 12px 0 0 -7px; font: italic 700 36px/32px "Liberation Sans", sans-serif; color: #000; display: flex; flex-direction: column; }
.panel-word small { font: 4px/4px "Liberation Sans", sans-serif; white-space: nowrap; }
.search { display: flex; height: 42px; margin: 11px 10px 11px 11px; border: 3px solid #f7882f; }
.search input { flex: 1; width: 0; min-width: 0; border: 0; background: none; padding: 0 13px; font-size: 13px; }
.search input::placeholder { color: #888; }
.search button { flex: none; width: 40px; color: #777; }
.menu > li { border-bottom: 1px solid #d4d4d4; }
.menu > li > a { display: flex; align-items: center; height: 45px; padding: 0 16px 0 15px; font-size: 14px; color: #444; }
.menu > li > a > span { flex: 1; margin-left: 10px; }
.menu > li > a > .ic18 + span { margin-left: 6px; }
.menu > li > a > svg { color: #f7882f; }
.menu > li > .current, .menu > li > .current > svg { color: #fff; }
.menu > li > .current { height: 44px; background: #f7882f; }
.menu > li > .open { color: #000; }
.arr { width: 10px; height: 10px; margin-bottom: 6px; }
.submenu a { display: flex; align-items: center; gap: 11px; height: 30px; padding-left: 26px; color: #777; }
.submenu svg { width: 13px; height: 14px; color: #f7882f; }
.submenu .wide { width: 16px; margin-right: -3px; }
.submenu .c-blue { color: #0073b7; }
.submenu .c-gray { color: #777; }
.main { flex: 1; min-width: 0; padding: 14px 0 0 15px; display: flex; flex-direction: column; }
.alert { flex: none; position: relative; display: flex; align-items: center; justify-content: space-between; height: 52px; margin-left: 15px; padding: 0 14px 0 31px; border: 1px solid #d6e9c6; border-right: 0; border-radius: 4px 0 0 4px; background: #dff0d8; color: #3c763d; }
.alert-badge { position: absolute; left: -15px; top: -15px; width: 35px; height: 35px; border: 1px solid #d6e9c6; border-radius: 50%; background: #dff0d8; display: flex; align-items: center; justify-content: center; }
.alert button { color: #b3c0ad; }
.alert button svg { width: 11px; height: 11px; }
.ans { flex: none; display: flex; height: 34px; margin-top: 20px; }
.ans label { display: flex; align-items: center; gap: 3px; padding: 0 13px; border-radius: 3px 0 0 3px; background: #f96b5c; color: #fff; }
.ans input { width: 200px; border: 1px solid #ccc; padding: 0 11px; background: #f8f8f8; font-size: 16px; color: #555; }
.actions { flex: none; display: flex; justify-content: flex-end; gap: 4px; margin-top: 5px; }
.actions button { height: 30px; padding: 0 10px; gap: 3px; font-size: 12px; color: #fff; }
.b-teal { background: #3ed0cf; }
.actions .b-teal { color: #d0eeee; }
.actions .b-blue { padding: 0 11px; background: #0075c0; }
.actions .b-green { background: #00a65a; border: 1px solid #008d4c; border-right: 0; padding-right: 9px; }
.panel { flex: 1; display: flex; flex-direction: column; border: 1px solid #ccc; border-right: 0; border-bottom: 0; background: #fff; }
.tabs { flex: none; display: flex; gap: 4px; height: 92px; border-bottom: 1px solid #ccc; }
.tabs a { display: flex; flex-direction: column; align-items: center; padding: 14px 15px 0; font: 9px/13px Roboto, sans-serif; text-align: center; color: #222; }
.tabs svg { width: 28px; height: 28px; margin-bottom: 1px; color: #f7882f; }
.tabs .w32 { width: 32px; }
.tabs .w36 { width: 36px; margin-left: -4px; margin-right: -4px; }
.tabs .on { margin: 0 -1px -1px 0; padding: 10px 16px 0; border-top: 3px solid #333; border-right: 1px solid #bbb; background: #f8f8f8; font-weight: 500; }
.tabs .short svg { height: 22px; margin-bottom: 0; }
.panel-body { display: grid; grid-template-columns: 1fr 246px; gap: 40px; padding: 10px 8px 0 19px; }
.form { display: grid; grid-template-columns: repeat(3, 1fr); gap: 15px 30px; align-content: start; padding-top: 10px; }
.meta { grid-column: 1 / -1; display: grid; grid-template-columns: subgrid; }
.meta p:first-child { grid-column: span 2; }
.call { padding-left: 67px; }
.tag { display: inline-block; padding: 0 6px; border-radius: 3px; background: #370df0; color: #fff; font: 700 11px/17px "Liberation Sans", sans-serif; }
.pair { display: grid; grid-template-columns: 1fr 1fr; gap: 30px; }
.field { min-width: 0; display: flex; flex-direction: column; gap: 5px; }
.field label { font-weight: 700; }
.start { grid-column-start: 1; }
.span2 { grid-column-end: 3; }
.field input { width: 100%; min-width: 0; height: 34px; padding: 0 12px; border: 1px solid #ccc; background: #eee; color: #555; }
.group { display: flex; }
.addon { flex: none; display: flex; align-items: center; padding: 0 12px; border: 1px solid #ccc; border-right: 0; color: #444; }
.yellow { color: #f0a010; }
.boxes { display: flex; flex-direction: column; gap: 20px; }
.box { height: 39px; padding: 0 10px 2px; gap: 5px; border-radius: 3px; background: #f7882f; color: #fff; font-size: 16px; box-shadow: 0 1px 2px #bbb; }
.box span { flex: 1; text-align: left; }
.box svg { height: 16px; }
.box .tog { width: 32px; height: 21px; }
.w12 { width: 12px; }
.w19 { width: 19px; }
.w6 { width: 6px; }
.w16 { width: 16px; }
.wide-btn { height: 34px; padding: 0 10px; font-size: 12px; }
.wide-btn svg { margin-bottom: 6px; }
.wide-btn span { flex: 1; text-align: center; }
.amber { border: 1px solid #e08e0b; background: #ff7701; color: #222; }
.coral { border: 1px solid #f04a38; background: #f96b5c; color: #fff; }

/* Dialog */
.backdrop { position: absolute; inset: 0; background: rgba(0, 0, 0, .5); }
.modal { position: absolute; top: 31px; left: 50%; width: 578px; transform: translateX(-50%); border-radius: 5px; background: #fff; box-shadow: 0 5px 15px rgba(0, 0, 0, .5); }
.modal-body { display: flex; justify-content: space-between; align-items: flex-start; min-height: 76px; padding: 16px 21px 16px 20px; border-bottom: 1px solid #e5e5e5; }
.modal-body p { padding-top: 4px; }
.modal-x { color: #ccc; }
.modal-x svg { width: 11px; height: 11px; }
.modal-foot { display: flex; justify-content: flex-end; padding: 19px 20px 20px; }
.ok { height: 34px; padding: 0 12px; border-radius: 2px; background: #333; color: #fff; font-weight: 700; box-shadow: 0 0 0 2px #7ab8ff; }

.scrollbar { flex: none; width: 17px; display: flex; flex-direction: column; align-items: center; padding: 7px 0; background: #f0f0f0; }
.scrollbar i { border: 4px solid transparent; }
.scrollbar .up { border-top: 0; border-bottom-color: #999; }
.scrollbar .down { margin-top: auto; border-bottom: 0; border-top-color: #444; }
.scrollbar.off .down { border-top-color: #999; }
.thumb { width: 13px; height: 36%; margin-top: 6px; background: #c1c1c1; }

/* Taskbar */
.taskbar { flex: none; display: flex; height: 40px; border-top: 1px solid #4a5f78; background: linear-gradient(90deg, #8da3bf, #90a8c4 50px, #b0cdeb 130px, #b0cdeb calc(100% - 170px), #8aa0bb calc(100% - 130px)); }
.start-btn { width: 54px; }
.start-btn svg { width: 36px; height: 36px; }
.task { width: 60px; margin-right: 2px; border: 1px solid #4f6682; border-radius: 3px; background: linear-gradient(135deg, #c6daf0, #e3eefa); }
.task.chrome { width: 55px; margin: 0 8px 0 5px; background: linear-gradient(135deg, #dfe7f2, #fff); box-shadow: 4px 0 0 -1px #c8dbef, 4px 0 0 #5d748f; }
.task.plain { border-color: transparent; background: none; width: 59px; }
.task svg { width: 32px; height: 32px; }
.tray { display: flex; align-items: center; margin-left: auto; color: #fff; }
.tray-up { width: 10px; height: 6px; margin-right: 12px; }
.tray-net { width: 16px; height: 16px; margin-right: 17px; }
.clock { display: flex; flex-direction: column; align-items: center; font: 11px/17px "Open Sans", "Noto Sans", sans-serif; }
.show-desktop { width: 15px; height: 39px; margin-left: 11px; border: 1px solid #4f6682; background: linear-gradient(#a9bdd4, #7f97b3 50%, #a5c3e4); }
```
